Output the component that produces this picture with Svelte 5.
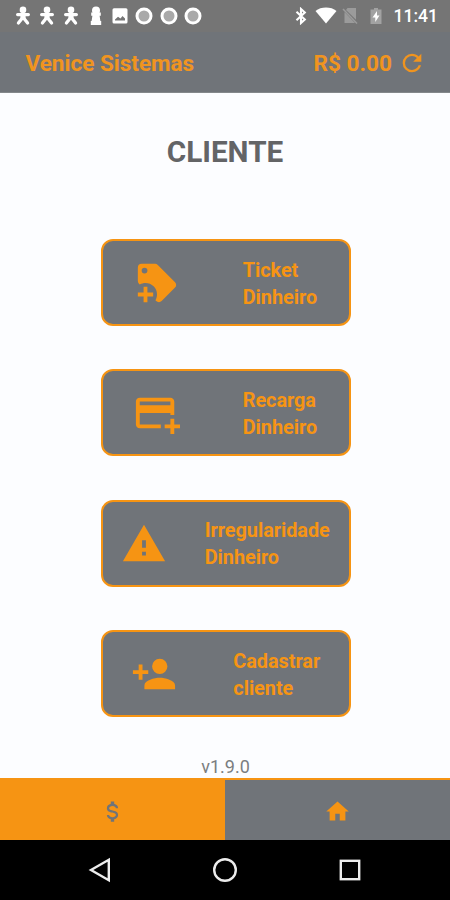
<script>
	const icons = {
		tag: 'M21.41,11.58L12.41,2.58C12.04,2.21 11.53,2 11,2H4A2,2 0 0,0 2,4V11C2,11.53 2.21,12.04 2.59,12.41L3,12.81C3.9,12.27 4.94,12 6,12A6,6 0 0,1 12,18C12,19.06 11.72,20.09 11.18,21L11.58,21.4C11.95,21.78 12.47,22 13,22C13.53,22 14.04,21.79 14.41,21.41L21.41,14.41C21.79,14.04 22,13.53 22,13C22,12.47 21.79,11.96 21.41,11.58M5.5,7A1.5,1.5 0 0,1 4,5.5A1.5,1.5 0 0,1 5.5,4A1.5,1.5 0 0,1 7,5.5A1.5,1.5 0 0,1 5.5,7M10,19H7V22H5V19H2V17H5V14H7V17H10V19Z',
		card: 'M21 18H24V20H21V23H19V20H16V18H19V15H21V18M19 8V6H3V8H19M19 12H3V18H14V20H3C1.89 20 1 19.1 1 18V6C1 4.89 1.89 4 3 4H19C20.11 4 21 4.9 21 6V13H19V12Z',
		alert: 'M13,14H11V10H13M13,18H11V16H13M1,21H23L12,2L1,21Z',
		person: 'M15,14C12.33,14 7,15.33 7,18V20H23V18C23,15.33 17.67,14 15,14M6,10V7H4V10H1V12H4V15H6V12H9V10M15,12A4,4 0 0,0 19,8A4,4 0 0,0 15,4A4,4 0 0,0 11,8A4,4 0 0,0 15,12Z',
		refresh: 'M17.65,6.35C16.2,4.9 14.21,4 12,4A8,8 0 0,0 4,12A8,8 0 0,0 12,20C15.73,20 18.84,17.45 19.73,14H17.65C16.83,16.33 14.61,18 12,18A6,6 0 0,1 6,12A6,6 0 0,1 12,6C13.66,6 15.14,6.69 16.22,7.78L13,11H20V4L17.65,6.35Z',
		dollar: 'M7,15H9C9,16.08 10.37,17 12,17C13.63,17 15,16.08 15,15C15,13.9 13.96,13.5 11.76,12.97C9.64,12.44 7,11.78 7,9C7,7.21 8.47,5.69 10.5,5.18V3H13.5V5.18C15.53,5.69 17,7.21 17,9H15C15,7.92 13.63,7 12,7C10.37,7 9,7.92 9,9C9,10.1 10.04,10.5 12.24,11.03C14.36,11.56 17,12.22 17,15C17,16.79 15.53,18.31 13.5,18.82V21H10.5V18.82C8.47,18.31 7,16.79 7,15Z',
		home: 'M10,20V14H14V20H19V12H22L12,3L2,12H5V20H10Z'
	};

	const actions = [
		{ icon: 'tag', lines: ['Ticket', 'Dinheiro'] },
		{ icon: 'card', lines: ['Recarga', 'Dinheiro'] },
		{ icon: 'alert', lines: ['Irregularidade', 'Dinheiro'] },
		{ icon: 'person', lines: ['Cadastrar', 'cliente'] }
	];

	const notifications = ['man', 'man', 'man', 'pawn', 'image', 'ring', 'ring', 'ring'];

	let balance = '0.00';
	let activeTab = 'money';
</script>

<div class="screen">
	<div class="status-bar">
		<div class="notifications">
			{#each notifications as kind}
				<svg viewBox="0 0 20 20">
					{#if kind === 'man'}
						<circle cx="10" cy="3.9" r="3.3" />
						<path d="M4.6 8.6H15.4M9 12.4L5.4 17M11 12.4L14.6 17" class="limbs" />
						<path d="M7.4 7H12.6V13.6H7.4Z" />
					{:else if kind === 'pawn'}
						<circle cx="10" cy="4.4" r="4" />
						<path d="M5.2 6.5H14.8V9.8H13.6L14.4 15H15.2V19H4.8V15H5.6L6.4 9.8H5.2Z" />
					{:else if kind === 'image'}
						<path fill-rule="evenodd" d="M4 2.2H16A1.5 1.5 0 0 1 17.5 3.7V16A1.5 1.5 0 0 1 16 17.5H4A1.5 1.5 0 0 1 2.5 16V3.7A1.5 1.5 0 0 1 4 2.2ZM5 14.5H15V12.5L12.5 10L10.5 12.5L8 10.8L5 13.5Z" />
					{:else}
						<circle cx="10" cy="10" r="7" class="ring" />
					{/if}
				</svg>
			{/each}
		</div>
		<div class="system">
			<svg class="bluetooth" viewBox="0 0 12 18">
				<path d="M1.5 4.8L9.8 12.6L6 16V2L9.8 5.4L1.5 13.2" />
			</svg>
			<svg class="wifi" viewBox="0 0 22 17">
				<path d="M11 16.5L0.5 4C6 -0.6 16 -0.6 21.5 4Z" />
			</svg>
			<svg class="sim" viewBox="0 0 16 18">
				<path d="M5.5 1H14V12.8L4 3ZM2.5 5V16H13Z" />
				<path d="M1 2L15 16.5" class="slash" />
			</svg>
			<svg class="battery" viewBox="0 0 12 18">
				<path d="M4 1H8V2.5H11.5V17H0.5V2.5H4Z" class="cell" />
				<path d="M7 4L2.5 10.5H5.3V15L9.5 8.5H7Z" />
			</svg>
			<span class="clock">11:41</span>
		</div>
	</div>

	<header>
		<h1>Venice Sistemas</h1>
		<button class="balance">
			<span>R$ {balance}</span>
			<svg viewBox="0 0 24 24"><path d={icons.refresh} /></svg>
		</button>
	</header>

	<main>
		<h2>CLIENTE</h2>
		<div class="actions">
			{#each actions as action}
				<button class="action">
					<svg viewBox="0 0 24 24"><path d={icons[action.icon]} /></svg>
					<span class="label">{action.lines[0]}<br />{action.lines[1]}</span>
				</button>
			{/each}
		</div>
		<p class="version">v1.9.0</p>
	</main>

	<div class="tabs">
		<button class:active={activeTab === 'money'} aria-label="Dinheiro" on:click={() => (activeTab = 'money')}>
			<svg viewBox="0 0 24 24"><path d={icons.dollar} /></svg>
		</button>
		<button class:active={activeTab === 'home'} aria-label="Home" on:click={() => (activeTab = 'home')}>
			<svg viewBox="0 0 24 24"><path d={icons.home} /></svg>
		</button>
	</div>

	<nav>
		<svg viewBox="0 0 28 28"><path d="M22.8 3.8V24.2L5 14Z" /></svg>
		<svg viewBox="0 0 28 28"><circle cx="14" cy="14" r="10.8" /></svg>
		<svg viewBox="0 0 28 28"><rect x="4.8" y="4.8" width="18.4" height="18.4" /></svg>
	</nav>
</div>

<style>
	:global(body) {
		margin: 0;
	}

	.screen {
		display: flex;
		flex-direction: column;
		width: 450px;
		height: 900px;
		overflow: hidden;
		background: #fcfdff;
		font-family: Roboto, sans-serif;
	}

	svg {
		display: block;
		flex: none;
		fill: currentColor;
	}

	button {
		border: none;
		padding: 0;
		font: inherit;
		cursor: pointer;
	}

	.status-bar {
		display: flex;
		justify-content: space-between;
		height: 32px;
		box-sizing: border-box;
		padding: 5px 12px 6px 12.5px;
		background: #757575;
		color: #fff;
	}

	.notifications {
		display: flex;
		align-items: center;
		gap: 4.4px;
	}

	.notifications svg {
		width: 20px;
		height: 20px;
	}

	.limbs {
		fill: none;
		stroke: currentColor;
		stroke-width: 3.2;
		stroke-linecap: round;
	}

	.ring {
		fill: #a9a9a9;
		stroke: currentColor;
		stroke-width: 3;
	}

	.system {
		display: flex;
		align-items: center;
	}

	.bluetooth {
		width: 12px;
		height: 18px;
		margin-right: 8px;
	}

	.bluetooth path {
		fill: none;
		stroke: currentColor;
		stroke-width: 2.1;
	}

	.wifi {
		width: 22px;
		height: 17px;
		margin-right: 5px;
	}

	.sim {
		width: 16px;
		height: 18px;
		margin-right: 12px;
		color: #9b9b9b;
	}

	.slash {
		stroke: currentColor;
		stroke-width: 1.5;
	}

	.battery {
		width: 12px;
		height: 18px;
		margin-right: 12px;
	}

	.cell {
		fill: #a2a2a2;
	}

	.clock {
		font-size: 17.5px;
		font-weight: 500;
		line-height: 20px;
	}

	header {
		display: flex;
		justify-content: space-between;
		align-items: center;
		height: 61px;
		box-sizing: border-box;
		padding: 1px 24px 0 25.5px;
		border-bottom: 1px solid #84888b;
		background: #707479;
		color: #f0941f;
	}

	h1 {
		margin: 0;
		font-size: 22.5px;
		font-weight: 700;
	}

	.balance {
		display: flex;
		align-items: center;
		gap: 6px;
		padding-top: 1px;
		background: none;
		color: inherit;
		font-size: 22.6px;
		font-weight: 700;
	}

	.balance svg {
		width: 28px;
		height: 28px;
	}

	main {
		display: flex;
		flex-direction: column;
		align-items: center;
		height: 685px;
	}

	h2 {
		margin: 41px 0 69px;
		color: #636466;
		font-size: 29.7px;
		font-weight: 700;
		line-height: 36px;
	}

	.actions {
		display: flex;
		flex-direction: column;
		gap: 43.4px;
		padding-left: 1px;
	}

	.action {
		display: flex;
		align-items: center;
		justify-content: space-around;
		width: 250px;
		height: 87px;
		box-sizing: border-box;
		border: 2px solid #f69413;
		border-radius: 12px;
		padding-top: 1px;
		background: #707479;
		color: #f69413;
	}

	.action svg {
		width: 46px;
		height: 46px;
	}

	.label {
		padding-top: 1px;
		font-size: 19.8px;
		font-weight: 700;
		line-height: 27px;
		text-align: left;
	}

	.version {
		margin: 39px 0 0;
		padding-left: 1px;
		color: #7b7d80;
		font-size: 18px;
		line-height: 22px;
	}

	.tabs {
		display: flex;
		height: 62px;
		box-sizing: border-box;
		border-top: 2px solid #f69413;
	}

	.tabs button {
		display: flex;
		flex: 1;
		align-items: center;
		justify-content: center;
		padding-top: 2px;
		background: #707479;
		color: #f69413;
	}

	.tabs button.active {
		background: #f69413;
		color: #707479;
	}

	.tabs svg {
		width: 27px;
		height: 27px;
	}

	nav {
		display: flex;
		flex: 1;
		align-items: center;
		justify-content: center;
		gap: 97px;
		background: #000;
	}

	nav svg {
		width: 28px;
		height: 28px;
		fill: none;
		stroke: #ececec;
		stroke-width: 2.4;
	}
</style>
